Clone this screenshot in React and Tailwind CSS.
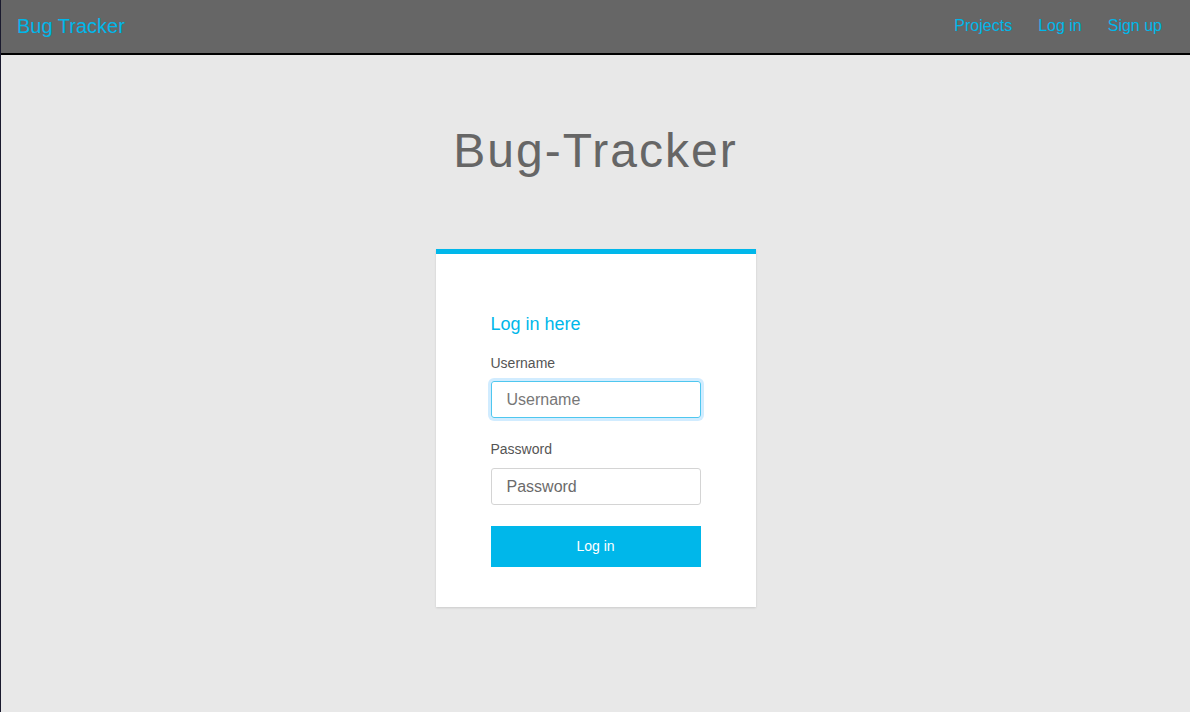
export default function App() {
  return (
    <div className="min-h-[712px] bg-[#e8e8e8] border-l border-[#1a1a2e] font-['Liberation_Sans',Arial,sans-serif]">
      {/* Navbar */}
      <nav className="h-[55px] bg-[#666666] border-b-2 border-black flex items-center justify-between pl-[16px] pr-[28px]">
        <a className="text-[20px] text-[#00b7ea] leading-none pb-[1px]">Bug Tracker</a>
        <div className="flex items-center gap-[26px] text-[16px] text-[#00b7ea] pb-[1px]">
          <a>Projects</a>
          <a>Log in</a>
          <a>Sign up</a>
        </div>
      </nav>

      {/* Hero */}
      <h1 className="text-center text-[48px] font-light tracking-[2px] text-[#666666] pt-[68px] leading-[56px]">
        Bug-Tracker
      </h1>

      {/* Card */}
      <div className="w-[320px] mx-auto mt-[70px] bg-white border-t-[5px] border-[#00b7ea] shadow-[0_1px_2px_rgba(0,0,0,0.12)] pl-[55px] pr-[55px] pt-[59px] pb-[40px]">
        <h2 className="text-[18px] text-[#00b7ea] leading-[22px]">Log in here</h2>

        <label className="block text-[14px] text-[#555555] mt-[20px] leading-[16px]">Username</label>
        <input
          autoFocus
          placeholder="Username"
          className="block w-[210px] h-[37px] mt-[10px] rounded-[3px] border border-[#4fc7ef] px-[15px] text-[16px] text-[#555] placeholder-[#777] outline-none shadow-[0_0_0_3px_rgba(0,150,255,0.18)]"
        />

        <label className="block text-[14px] text-[#555555] mt-[23px] leading-[16px]">Password</label>
        <input
          type="password"
          placeholder="Password"
          className="block w-[210px] h-[37px] mt-[11px] rounded-[3px] border border-[#d4d4d4] px-[15px] text-[16px] text-[#555] placeholder-[#6b6b6b] outline-none"
        />

        <button className="block w-[210px] h-[41px] mt-[21px] bg-[#00b7ea] text-white text-[14px]">
          Log in
        </button>
      </div>
    </div>
  );
}
